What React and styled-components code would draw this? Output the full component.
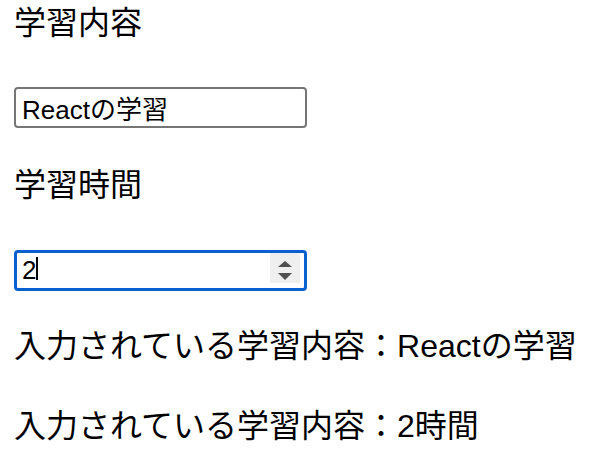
import React, { useState } from "react";
import styled, { createGlobalStyle } from "styled-components";

const Global = createGlobalStyle`
  html, body { margin: 0; padding: 0; background: #fff; }
  body { font-family: "Liberation Sans", "Noto Sans CJK JP", sans-serif; color: #000; }
`;

const Page = styled.div`
  display: flex;
  flex-direction: column;
  align-items: flex-start;
  padding: 0 14px;
`;

const Label = styled.p`
  margin: ${(p) => p.$mt || 0}px 0 0 0;
  font-size: 32px;
  line-height: 46px;
  white-space: nowrap;
`;

const Field = styled.div`
  position: relative;
  margin-top: ${(p) => p.$mt || 0}px;
  width: 293px;
  height: 41px;
`;

const Input = styled.input`
  box-sizing: border-box;
  width: 100%;
  height: 100%;
  margin: 0;
  padding: 0 0 0 ${(p) => (p.$focused ? 5 : 6)}px;
  font-family: "Liberation Sans", "Noto Sans CJK JP", sans-serif;
  font-size: 26px;
  color: #000;
  background: #fff;
  border: ${(p) => (p.$focused ? "3px solid #0a60cf" : "2px solid #767676")};
  border-radius: 4px;
  outline: none;
  -moz-appearance: textfield;
  &::-webkit-inner-spin-button,
  &::-webkit-outer-spin-button {
    -webkit-appearance: none;
    margin: 0;
  }
`;

const Spinner = styled.div`
  position: absolute;
  top: 3px;
  right: 7px;
  width: 30px;
  height: 30px;
  background: #efefef;
  display: flex;
  align-items: center;
  justify-content: center;
  pointer-events: none;
`;

const Caret = styled.span`
  position: absolute;
  left: 22px;
  top: 7px;
  width: 2px;
  height: 23px;
  background: #000;
  pointer-events: none;
`;

export default function App() {
  const [content, setContent] = useState("Reactの学習");
  const [time, setTime] = useState("2");
  return (
    <>
      <Global />
      <Page>
        <Label>学習内容</Label>
        <Field $mt={41}>
          <Input type="text" value={content} onChange={(e) => setContent(e.target.value)} />
        </Field>
        <Label $mt={34}>学習時間</Label>
        <Field $mt={42}>
          <Input $focused type="number" value={time} onChange={(e) => setTime(e.target.value)} />
          <Caret />
          <Spinner>
            <svg width="30" height="30" viewBox="0 0 30 30">
              <polygon points="15,8 22,14 8,14" fill="#505050" />
              <polygon points="8,20 22,20 15,27" fill="#505050" />
            </svg>
          </Spinner>
        </Field>
        <Label $mt={32}>入力されている学習内容：{content}</Label>
        <Label $mt={34}>入力されている学習内容：{time}時間</Label>
      </Page>
    </>
  );
}
